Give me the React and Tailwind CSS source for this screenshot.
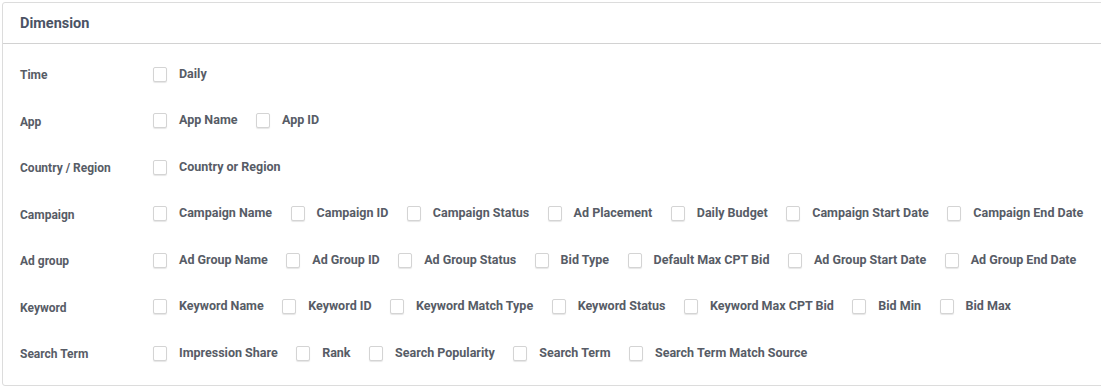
import React from 'react'

const rows = [
  { label: 'Time', items: ['Daily'] },
  { label: 'App', items: ['App Name', 'App ID'] },
  { label: 'Country / Region', items: ['Country or Region'] },
  {
    label: 'Campaign',
    items: ['Campaign Name', 'Campaign ID', 'Campaign Status', 'Ad Placement', 'Daily Budget', 'Campaign Start Date', 'Campaign End Date'],
  },
  {
    label: 'Ad group',
    items: ['Ad Group Name', 'Ad Group ID', 'Ad Group Status', 'Bid Type', 'Default Max CPT Bid', 'Ad Group Start Date', 'Ad Group End Date'],
  },
  {
    label: 'Keyword',
    items: ['Keyword Name', 'Keyword ID', 'Keyword Match Type', 'Keyword Status', 'Keyword Max CPT Bid', 'Bid Min', 'Bid Max'],
  },
  {
    label: 'Search Term',
    items: ['Impression Share', 'Rank', 'Search Popularity', 'Search Term', 'Search Term Match Source'],
  },
]

const Check = ({ text }) => (
  <label className="flex items-center mr-[18.5px] cursor-pointer">
    <span className="w-[14px] h-[15px] rounded-[2px] border border-[#d4d4d4] bg-white shadow-[0_1px_1px_rgba(0,0,0,0.1)]" />
    <span className="ml-[12px] text-[12.5px] font-bold text-[#575c66]">{text}</span>
  </label>
)

export default function App() {
  return (
    <div className="bg-white pt-[2px] pl-[2px] font-['Roboto',sans-serif] overflow-hidden w-[1101px] h-[387px]">
      <div className="w-[1120px] h-[384px] border border-[#dcdcdc] rounded-[3px] bg-white">
        <div className="h-[41px] flex items-center pl-[17px] pt-[2px] border-b border-[#d2d2d2]">
          <h2 className="text-[14.5px] font-bold text-[#4b5365]">Dimension</h2>
        </div>
        <div className="pt-[7px] pl-[16px]">
          {rows.map((r) => (
            <div key={r.label} className="h-[46.5px] flex items-center">
              <div className="w-[134px] pl-[1px] text-[12px] font-bold text-[#575c66] mt-[2px]">{r.label}</div>
              <div className="flex items-center">
                {r.items.map((it) => (
                  <Check key={it} text={it} />
                ))}
              </div>
            </div>
          ))}
        </div>
      </div>
    </div>
  )
}
